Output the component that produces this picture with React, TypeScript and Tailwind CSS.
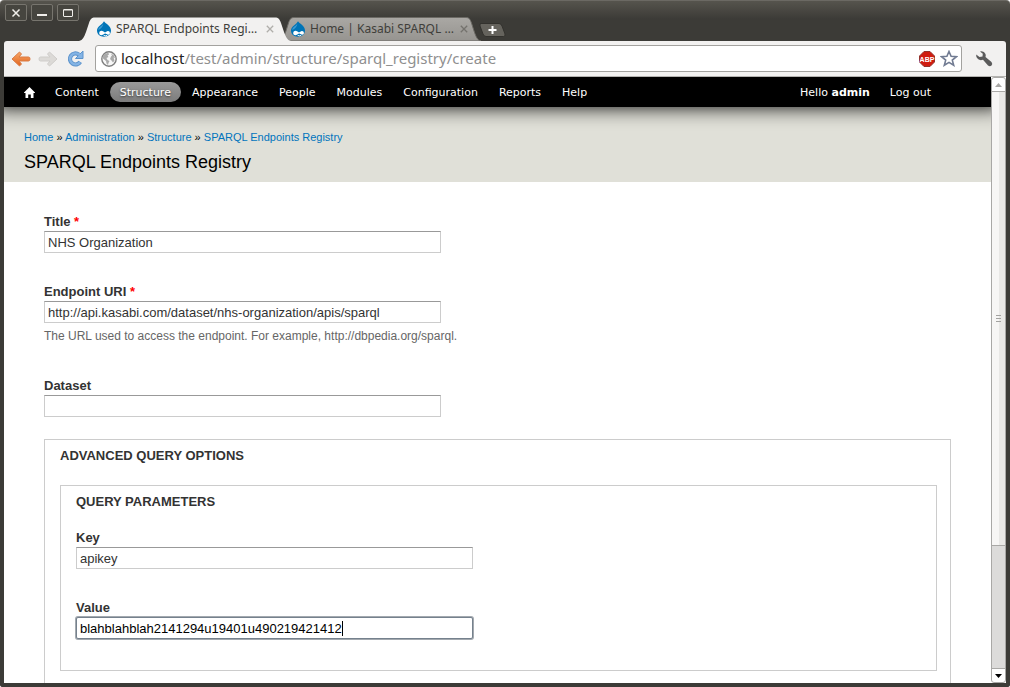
import { useEffect, useRef, useState, type ReactNode } from "react";

const menu = ["Content", "Structure", "Appearance", "People", "Modules", "Configuration", "Reports", "Help"];

function Drop() {
  return (
    <svg width="16" height="16" viewBox="0 0 16 16" className="shrink-0" aria-hidden="true">
      <path d="M8 0.3C9 2.6 15 4.4 15 9.6C15 13.4 12 15.8 8 15.8S1 13.4 1 9.6C1 5.4 6.6 3.4 8 0.3Z" fill="#0074b7" />
      <path d="M7.4 2.8C6 5 2.6 6 2.2 9C5 8 7 5.600 7.400 2.800Z" fill="#3e9bd2" />
      <path d="M3.200 12.200C3.200 10.300 5 9.600 6.200 9.900C7.600 10.200 8.200 11.300 9 11.300C9.900 11.300 10.600 9.900 12 9.900C13.200 9.900 13.900 10.800 13.900 12C13.900 13.200 12.900 13.900 11.900 13.700C10.600 13.400 10.100 12.600 9.200 12.600C8.200 12.600 7.400 14.200 5.600 14.200C4.200 14.200 3.200 13.400 3.200 12.200Z" fill="#fff" />
      <path d="M7.600 14.300Q9.400 15.300 11.200 14.300" fill="none" stroke="#fff" strokeWidth="0.900" />
    </svg>
  );
}

function WindowButton({ label, children }: { label: string; children: ReactNode }) {
  return (
    <button
      type="button"
      aria-label={label}
      className="flex h-[17px] w-[22px] items-center justify-center rounded-[2px] border border-[#77756e] bg-[#46453f]"
    >
      <svg width="12" height="12" viewBox="0 0 12 12" fill="none" stroke="#f0eeea" className="shrink-0" aria-hidden="true">
        {children}
      </svg>
    </button>
  );
}

function Tab({ title, active }: { title: string; active?: boolean }) {
  return (
    <div className={active ? "relative z-10 h-6 w-[212px]" : "relative -ml-3 h-6 w-[202px]"}>
      <svg
        className="absolute inset-0 h-full w-full"
        viewBox="0 0 212 24"
        preserveAspectRatio="none"
        aria-hidden="true"
      >
        <defs>
          <linearGradient id="idle-tab" x1="0" y1="0" x2="0" y2="1">
            <stop offset="0" stopColor="#aaa8a4" />
            <stop offset="1" stopColor="#969490" />
          </linearGradient>
        </defs>
        <path
          d="M0 24C4 23 5 20 7 15L10 6C11.500 2 12.500 0.500 16 0.500H196C199.500 0.500 200.500 2 202 6L205 15C207 20 208 23 212 24Z"
          fill={active ? "#f2f1f0" : "url(#idle-tab)"}
          stroke={active ? "none" : "#6c6a65"}
        />
      </svg>
      <div className={active ? "relative flex h-full items-center pr-[15px] pl-[17px]" : "relative flex h-full items-center pr-[11px] pl-[11px]"}>
        <Drop />
        <a href="#" className="ml-1 grow font-['Noto_Sans',sans-serif] text-xs whitespace-nowrap text-[#3f3e3a]">
          {title}
        </a>
        <button type="button" aria-label="Close tab" className="flex h-3 w-3 items-center justify-center">
          <svg width="8" height="8" viewBox="0 0 8 8" stroke={active ? "#b0aeaa" : "#74726d"} strokeWidth="1.300" aria-hidden="true">
            <path d="M0.800 0.800L7.200 7.200M7.200 0.800L0.800 7.200" />
          </svg>
        </button>
      </div>
    </div>
  );
}

function Arrow({ back }: { back?: boolean }) {
  return (
    <svg width="20" height="18" viewBox="0 0 20 18" aria-hidden="true">
      <defs>
        <linearGradient id="back-fill" x1="0" y1="0" x2="0" y2="1">
          <stop offset="0" stopColor="#f9a868" />
          <stop offset="1" stopColor="#e0621c" />
        </linearGradient>
      </defs>
      {back ? (
        <path d="M1 9L8.500 2L10.500 4L8 7H17.500Q19 7 19 9T17.500 11H8L10.500 14L8.500 16Z" fill="url(#back-fill)" stroke="#d97b45" strokeLinejoin="round" />
      ) : (
        <path d="M19 9L11.500 2L9.500 4L12 7H2.500Q1 7 1 9T2.500 11H12L9.500 14L11.500 16Z" fill="#dcdad7" stroke="#cfcdca" strokeLinejoin="round" />
      )}
    </svg>
  );
}

function Browser() {
  return (
    <header className="shrink-0">
      <div className="flex h-[41px] rounded-t-[4px] border-t border-[#6b6963] bg-linear-to-b from-[#56544d] to-[#3c3b37] to-45%">
        <div className="flex gap-1 self-start pt-[3px] pl-[5px]">
          <WindowButton label="Close">
            <path d="M2.500 2.500L9.500 9.500M9.500 2.500L2.500 9.500" strokeWidth="1.500" />
          </WindowButton>
          <WindowButton label="Minimize">
            <path d="M1 8H11" strokeWidth="2" />
          </WindowButton>
          <WindowButton label="Maximize">
            <rect x="1.500" y="2.500" width="9" height="7" rx="0.500" />
            <path d="M1.500 3H10.500" />
          </WindowButton>
        </div>
        <nav aria-label="Tabs" className="flex items-end">
          <Tab title="SPARQL Endpoints Regi…" active />
          <Tab title="Home | Kasabi SPARQL …" />
          <button type="button" aria-label="New tab" className="-ml-[3px] h-[21px]">
            <svg width="28" height="20" viewBox="0 0 28 20" aria-hidden="true">
              <path d="M2.500 2.500H21Q23 2.500 24 5L27 13Q27.500 15.500 25.500 15.500H8Q6 15.500 5 13L2 5Q1.500 2.500 3 2.500Z" fill="#65635d" stroke="#33322e" />
              <path d="M14.500 5V13M10.500 9H18.500" stroke="#fff" strokeWidth="2" />
            </svg>
          </button>
        </nav>
      </div>
      <div className="bg-[#3c3b37] px-1">
        <div className="flex h-9 items-center rounded-t-[3px] border-b border-[#b4b3b0] bg-[#f2f1f0] pr-3 pl-[7px]">
          <button type="button" aria-label="Back"><Arrow back /></button>
          <button type="button" aria-label="Forward" className="ml-[7px]"><Arrow /></button>
          <button type="button" aria-label="Reload" className="ml-2">
            <svg width="19" height="18" viewBox="0 0 19 18" fill="none" aria-hidden="true">
              <path d="M12.800 4.600A5.500 5.500 0 1 0 14.200 11.800" stroke="#5c93cb" strokeWidth="4.200" />
              <path d="M17 1V8.500H9.500Z" fill="#84b4e5" stroke="#5c93cb" strokeLinejoin="round" />
              <path d="M13.500 5A5.500 5.500 0 1 0 14 12.200" stroke="#84b4e5" strokeWidth="2.400" />
            </svg>
          </button>
          <div className="ml-[10px] flex h-[27px] min-w-0 grow items-center rounded-[3px] border border-[#a3a29f] bg-white pr-[3px] pl-[5px]">
            <svg width="16" height="16" viewBox="0 0 16 16" className="shrink-0" aria-hidden="true">
              <circle cx="8" cy="8" r="7.200" fill="#f8f8f8" stroke="#7f7f7f" strokeWidth="1.400" />
              <path d="M3 3.500Q5 1.500 7.500 2L8 3.500L6.500 4.500L7.500 6L5.500 7L6.500 9L8.500 10L7.500 12L7 14L5.500 12.500L5 10L2 7.500Q1.500 5.500 3 3.500ZM10 2.500L13 4.500L14 7L12.500 6.500L13.500 9.500L12 11.500L10.500 9.500L9 8L10 5.500L11 4.500Z" fill="#aaa" />
            </svg>
            <div
              role="textbox"
              aria-label="Address"
              className="ml-1 min-w-0 grow truncate font-['Noto_Sans',sans-serif] text-[15px] text-[#8f8f8f]"
            >
              <span className="text-[#222]">localhost</span>/test/admin/structure/sparql_registry/create
            </div>
            <button type="button" aria-label="Adblock Plus">
              <svg width="16" height="16" viewBox="0 0 16 16" aria-hidden="true">
                <path d="M5 0.500H11L15.500 5V11L11 15.500H5L0.500 11V5Z" fill="#d01c10" stroke="#93332c" />
                <text x="8" y="10.800" textAnchor="middle" fill="#fff" fontSize="7" fontWeight="bold" fontFamily="Liberation Sans Narrow, Liberation Sans, sans-serif">ABP</text>
              </svg>
            </button>
            <button type="button" aria-label="Bookmark" className="ml-[5px]">
              <svg width="18" height="17" viewBox="0 0 18 17" aria-hidden="true">
                <path d="M9 1.500L11.100 6.300L16.400 6.700L12.300 10.100L13.700 15.300L9 12.400L4.300 15.300L5.700 10.100L1.600 6.700L6.900 6.300Z" fill="#fff" stroke="#717b92" strokeWidth="1.600" />
              </svg>
            </button>
          </div>
          <button type="button" aria-label="Settings" className="ml-3">
            <svg width="20" height="20" viewBox="0 0 20 20" aria-hidden="true">
              <path d="M6 2.500Q10 1.500 11.500 5Q12 6.500 11.500 8L17.500 13Q19 15 17.500 16.500T14 16.500L9 10.800Q5 12 3 9Q2 7.500 2.200 5.500L5.500 8L8.500 7.500L8.800 4.800Z" fill="#5b5b5b" />
            </svg>
          </button>
        </div>
      </div>
    </header>
  );
}

function AdminBar() {
  return (
    <nav
      aria-label="Administration"
      className="relative flex h-[30px] shrink-0 items-center justify-between bg-black pr-[50px] pl-5 font-['DejaVu_Sans',sans-serif] text-[11px] leading-[19px] text-white shadow-[0_-10px_20px_10px_#000]"
    >
      <div className="flex items-center gap-px">
        <a href="#" aria-label="Home" className="mr-[9px]">
          <svg width="11" height="11" viewBox="0 0 11 11" fill="#fff" aria-hidden="true">
            <path d="M5.500 0L11 5.500V6H9.500V11H6.800V7.500H4.200V11H1.500V6H0V5.500Z" />
          </svg>
        </a>
        {menu.map((item) => (
          <a
            key={item}
            href="#"
            className={
              item === "Structure"
                ? "rounded-full bg-linear-to-b from-[#999] to-[#7c7c7c] px-[10px] pt-px [text-shadow:0_1px_2px_#333]"
                : "px-[10px] pt-px"
            }
          >
            {item}
          </a>
        ))}
      </div>
      <div className="flex gap-5 pt-px">
        <a href="#">Hello <strong>admin</strong></a>
        <a href="#" className="pr-[10px]">Log out</a>
      </div>
    </nav>
  );
}

const fieldClass =
  "block h-[22px] w-full border border-[#ccc] border-t-[#999] bg-white px-[3px] text-[13px] text-[#333] caret-transparent outline-none focus:rounded-[2px] focus:border-[#75818d] focus:text-black focus:ring-1 focus:ring-[#a3a9af]";

interface FieldProps {
  id: string;
  label: string;
  value?: string;
  required?: boolean;
  hint?: string;
  focused?: boolean;
}

function Field({ id, label, value, required, hint, focused }: FieldProps) {
  const ref = useRef<HTMLInputElement>(null);
  const [caret, setCaret] = useState<number | null>(null);

  // Places the caret bar after the text that precedes the cursor.
  const placeCaret = () => {
    const input = ref.current;
    const ctx = document.createElement("canvas").getContext("2d");
    if (!input || !ctx) return;
    ctx.font = getComputedStyle(input).font;
    const before = input.value.slice(0, input.selectionEnd ?? input.value.length);
    setCaret(4 + Math.round(ctx.measureText(before).width) - input.scrollLeft);
  };

  useEffect(() => {
    if (focused && ref.current) {
      const end = ref.current.value.length;
      ref.current.focus();
      ref.current.setSelectionRange(end, end);
      placeCaret();
    }
  }, [focused]);

  return (
    <div>
      <label htmlFor={id} className="block w-fit text-[13px] leading-[18px] font-bold">
        {label}
        {required && <span className="text-[#f00]"> *</span>}
      </label>
      <div className="relative w-[397px] max-w-full">
        <input
          ref={ref}
          id={id}
          type="text"
          defaultValue={value}
          onFocus={placeCaret}
          onSelect={placeCaret}
          onInput={placeCaret}
          onBlur={() => setCaret(null)}
          className={fieldClass}
        />
        {caret !== null && (
          <span aria-hidden="true" className="pointer-events-none absolute top-1 h-[15px] w-px bg-black" style={{ left: caret }} />
        )}
      </div>
      {hint && <p className="mt-[3px] mb-px text-xs leading-5 text-[#666]">{hint}</p>}
    </div>
  );
}

function Scrollbar() {
  return (
    <div aria-hidden="true" className="flex w-[15px] shrink-0 flex-col rounded-[3px] border border-[#a9a8a6] bg-white">
      <div className="flex h-[14px] items-center justify-center border-b border-[#a9a8a6]">
        <svg width="7" height="4" viewBox="0 0 7 4"><path d="M0 4L3.500 0L7 4Z" fill="#a9a8a6" /></svg>
      </div>
      <div className="flex grow-[453] flex-col items-center justify-center gap-[2px] bg-linear-to-r from-[#f7f6f5] from-50% to-[#e9e8e6] to-50%">
        <i className="h-px w-[5px] bg-[#a3a2a0]" />
        <i className="h-px w-[5px] bg-[#a3a2a0]" />
        <i className="h-px w-[5px] bg-[#a3a2a0]" />
      </div>
      <div className="grow-[124] border-y border-[#a9a8a6] bg-[#dcdbda]" />
      <div className="flex h-[13px] items-center justify-center">
        <svg width="7" height="4" viewBox="0 0 7 4"><path d="M0 0L3.500 4L7 0Z" fill="#000" /></svg>
      </div>
    </div>
  );
}

export default function App() {
  return (
    <div className="flex h-screen flex-col overflow-hidden bg-white font-['Liberation_Sans',sans-serif] text-[#333]">
      <Browser />
      <div className="flex min-h-0 grow rounded-b-[3px] border-x-4 border-b-4 border-[#3c3b37]">
        <div className="flex min-w-0 grow flex-col overflow-hidden">
          <AdminBar />
          <div className="h-[75px] shrink-0 bg-[#e0e0d8] px-5 pt-[21px]">
            <nav aria-label="Breadcrumb" className="text-[11px] leading-[18px] text-black">
              <a href="#" className="text-[#0074bd]">Home</a> » <a href="#" className="text-[#0074bd]">Administration</a> »{" "}
              <a href="#" className="text-[#0074bd]">Structure</a> » <a href="#" className="text-[#0074bd]">SPARQL Endpoints Registry</a>
            </nav>
            <h1 className="mt-1 text-lg leading-6 text-black">SPARQL Endpoints Registry</h1>
          </div>
          <form className="min-h-0 grow overflow-hidden pt-[31px] pr-10 pl-10">
            <div className="flex flex-col gap-[30px]">
              <Field id="title" label="Title" value="NHS Organization" required />
              <Field
                id="uri"
                label="Endpoint URI"
                value="http://api.kasabi.com/dataset/nhs-organization/apis/sparql"
                required
                hint="The URL used to access the endpoint. For example, http://dbpedia.org/sparql."
              />
              <Field id="dataset" label="Dataset" />
            </div>
            <fieldset className="mt-[22px] border border-[#ccc] px-[15px] pt-[7px] pr-[13px] pb-10">
              <legend className="float-left w-full text-[13px] leading-[18px] font-bold">ADVANCED QUERY OPTIONS</legend>
              <div className="clear-both pt-5">
                <fieldset className="border border-[#ccc] px-[15px] pt-[7px] pb-[31px]">
                  <legend className="float-left w-full text-[13px] leading-[18px] font-bold">QUERY PARAMETERS</legend>
                  <div className="clear-both flex flex-col gap-[30px] pt-[18px]">
                    <Field id="key" label="Key" value="apikey" />
                    <Field id="value" label="Value" value="blahblahblah2141294u19401u490219421412" focused />
                  </div>
                </fieldset>
              </div>
            </fieldset>
          </form>
        </div>
        <Scrollbar />
      </div>
    </div>
  );
}
